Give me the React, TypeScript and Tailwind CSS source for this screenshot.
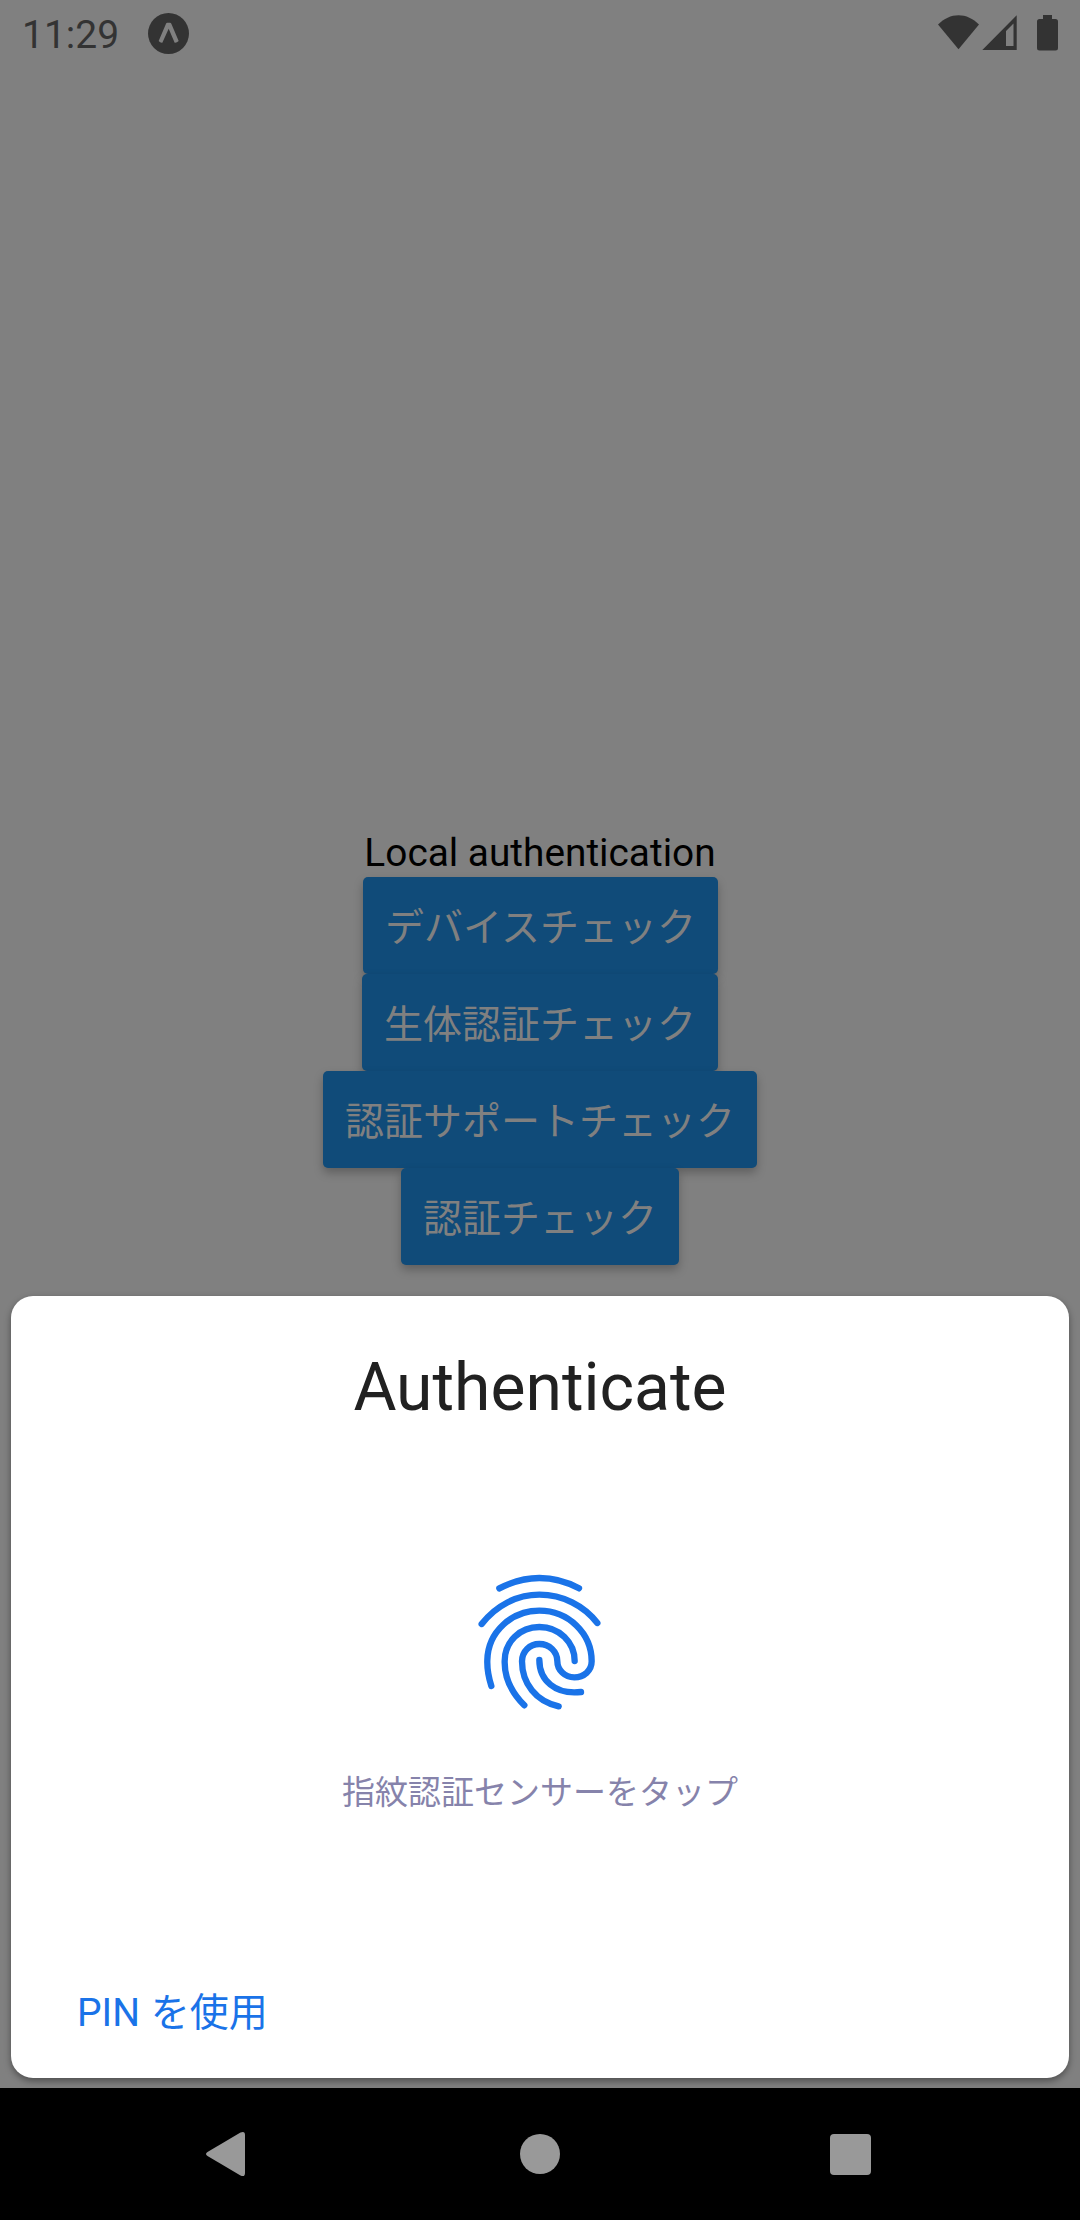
const CHECK_BUTTONS = [
  { label: "デバイスチェック", width: "w-[355px] ml-px" },
  { label: "生体認証チェック", width: "w-[356px]" },
  { label: "認証サポートチェック", width: "w-[434px]" },
  { label: "認証チェック", width: "w-[278px]" },
];

function StatusBar() {
  return (
    <header className="flex h-[66px] items-center justify-between pr-[20px] pl-[22px] text-[#333333]">
      <div className="flex items-center">
        <span className="w-[126px] pt-[3px] text-[39px] leading-[66px] whitespace-nowrap">11:29</span>
        <svg className="h-[41px] w-[41px]" viewBox="0 0 123 123">
          <circle cx="61.5" cy="61.5" r="61.5" fill="currentColor" />
          <path d="M32 84L54 32Q55 29 58 29H66Q69 29 70 32L92 84Q86 90 80 89L62 47L43 89Q37 90 32 84z" fill="#808080" />
        </svg>
      </div>
      <svg className="h-[66px] w-[122px]" viewBox="0 0 122 66" fill="currentColor">
        <path d="M20.5 49.3L0 24.5C6 18.5 13 15.2 20.5 15.2S35 18.5 41 24.5z" />
        <path fillRule="evenodd" d="M44.3 50L78.7 15.3V50zM68 31v15h7.500V23.5z" />
        <path d="M105 15h9v4h3.500q2.500 0 2.500 2.500V48q0 2.500-2.500 2.500h-16q-2.500 0-2.500-2.500V21.500q0-2.500 2.500-2.500h3.500z" />
      </svg>
    </header>
  );
}

function FingerprintIcon() {
  return (
    <svg
      className="h-[160px] w-[160px]"
      viewBox="0 0 480 480"
      fill="none"
      stroke="#1a73e8"
      strokeWidth="19"
      strokeLinecap="round"
      strokeLinejoin="round"
    >
      <path d="M118 85Q177 54 238 54Q300 54 357 85" />
      <path d="M65 192C108 137 170 104 238 104C308 104 372 137 412 189" />
      <path d="M94 378C85 350 81 325 82 300C84 215 155 152 238 152C325 152 395 220 395 304C395 332 372 352 343 352C314 352 292 330 292 304C292 275 268 252 238 252C209 252 186 275 186 304C186 370 228 425 296 439" />
      <path d="M193 436C152 395 133 350 134 303C134 245 180 201 238 201C298 201 344 247 344 303" />
      <path d="M238 300C238 360 285 405 363 396" />
    </svg>
  );
}

function AuthSheet() {
  return (
    <section className="mx-[11px] mt-[31px] flex h-[782px] flex-col items-center rounded-[22px] bg-white shadow-[0_3px_7px_rgba(0,0,0,0.4)]">
      <h1 className="mt-[48px] text-[66px] leading-[88px] whitespace-nowrap text-[#212121]">Authenticate</h1>
      <div className="mt-[128px]">
        <FingerprintIcon />
      </div>
      <p className="mt-[49px] text-[33px] leading-[48px] whitespace-nowrap text-[#8683ab]">
        指紋認証センサーをタップ
      </p>
      <button className="mt-auto mb-[37px] ml-[66px] self-start text-[39px] leading-[56px] whitespace-nowrap text-[#1a73e8] [word-spacing:1px]">
        PIN を使用
      </button>
    </section>
  );
}

function NavBar() {
  return (
    <nav className="mt-auto flex h-[132px] items-center justify-between bg-black pr-[209px] pl-[206px]">
      <svg className="h-[46px] w-[44px]" viewBox="0 0 44 46" fill="#999999">
        <path d="M1.500 21L34.500 1.500q4.500-2 4.500 2.500v38q0 4.500-4.500 2.500L1.500 25q-3-2 0-4z" />
      </svg>
      <div className="h-[40px] w-[40px] rounded-full bg-[#999999]" />
      <div className="h-[41px] w-[41px] rounded-[4px] bg-[#999999]" />
    </nav>
  );
}

export default function App() {
  return (
    <div className="flex h-[2220px] w-[1080px] flex-col overflow-hidden bg-[#808080] font-['Roboto','Noto_Sans_CJK_JP',sans-serif]">
      <StatusBar />
      <main className="mt-[760px] flex flex-col items-center">
        <p className="h-[51px] text-[38.8px] leading-[53px] whitespace-nowrap text-black">Local authentication</p>
        {CHECK_BUTTONS.map(({ label, width }) => (
          <button
            key={label}
            className={`${width} h-[97px] rounded-[5px] bg-[#104b79] pt-[5px] text-[39px] leading-[92px] whitespace-nowrap text-[#808080] shadow-[0_5px_10px_rgba(0,0,0,0.25)]`}
          >
            {label}
          </button>
        ))}
      </main>
      <AuthSheet />
      <NavBar />
    </div>
  );
}
